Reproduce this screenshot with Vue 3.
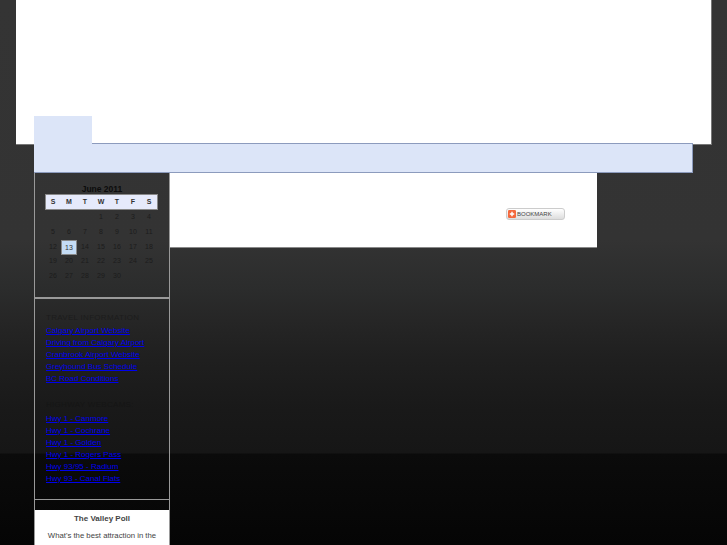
<script setup>
const weeks = [
  ['', '', '', 1, 2, 3, 4],
  [5, 6, 7, 8, 9, 10, 11],
  [12, 13, 14, 15, 16, 17, 18],
  [19, 20, 21, 22, 23, 24, 25],
  [26, 27, 28, 29, 30, '', ''],
];
const days = ['S', 'M', 'T', 'W', 'T', 'F', 'S'];
const travel = [
  'Calgary Airport Website',
  'Driving from Calgary Airport',
  'Cranbrook Airport Website',
  'Greyhound Bus Schedule',
  'BC Road Conditions',
];
const cams = [
  'Hwy 1 - Canmore',
  'Hwy 1 - Cochrane',
  'Hwy 1 - Golden',
  'Hwy 1 - Rogers Pass',
  'Hwy 93/95 - Radium',
  'Hwy 93 - Canal Flats',
];
</script>

<template>
  <div class="page">
    <div class="header">
      <div class="tab"></div>
    </div>
    <div class="main">
      <div class="bar"></div>
      <div class="columns">
        <div class="sidebar">
          <div class="calendar">
            <div class="month">June 2011</div>
            <div class="dayrow">
              <span v-for="(d, i) in days" :key="i">{{ d }}</span>
            </div>
            <div class="week" v-for="(w, i) in weeks" :key="i">
              <span v-for="(n, j) in w" :key="j" :class="{ today: n === 13 }">{{ n }}</span>
            </div>
          </div>
          <div class="links">
            <h3>TRAVEL INFORMATION</h3>
            <a v-for="t in travel" :key="t" href="#">{{ t }}</a>
            <h3 class="second">HIGHWAY WEBCAMS:</h3>
            <a v-for="c in cams" :key="c" href="#">{{ c }}</a>
          </div>
          <div class="gap"></div>
          <div class="poll">
            <b>The Valley Poll</b>
            <p>What's the best attraction in the Windermere Valley?</p>
          </div>
        </div>
        <div class="content">
          <div class="bookmark">
            <svg width="8" height="8" viewBox="0 0 9 9">
              <rect width="9" height="9" rx="1.5" fill="#f4683c" />
              <path d="M4.5 2v5M2 4.500h5" stroke="#fff" stroke-width="1.6" />
            </svg>
            <span>BOOKMARK</span>
          </div>
        </div>
      </div>
    </div>
  </div>
</template>

<style>
html, body {
  margin: 0;
  background: #000;
}
</style>

<style scoped>
.page {
  height: 545px;
  overflow: hidden;
  background: linear-gradient(#343434 0, #333333 240px, #2b2c2c 290px, #262626 320px, #1f1f1f 360px, #191919 410px, #161616 453px, #0b0b0b 454px, #050505 545px);
  font-family: "Liberation Sans", Arial, sans-serif;
}

.header {
  box-sizing: border-box;
  width: 696px;
  height: 145px;
  margin-left: 16px;
  padding: 116px 0 0 18px;
  background: #fff;
  border-right: 1px solid #777;
  border-bottom: 1px solid #777;
}

.tab {
  position: relative;
  z-index: 1;
  width: 58px;
  height: 29px;
  background: #dce5f8;
}

.main {
  margin-left: 34px;
  margin-top: -2px;
}

.bar {
  box-sizing: border-box;
  width: 659px;
  height: 30px;
  background: #dce5f8;
  border: 1px solid #8c9bbd;
  border-left: 0;
}

.columns {
  display: flex;
  align-items: flex-start;
}

.sidebar {
  box-sizing: border-box;
  width: 136px;
  border-left: 1px solid #999;
  border-right: 1px solid #999;
}

.calendar {
  box-sizing: border-box;
  height: 126px;
  padding: 11px 10px 0;
  border-bottom: 2px solid #999;
  font-size: 7px;
  color: #1c1c1c;
  text-align: center;
}

.month {
  font-size: 8.500px;
  font-weight: bold;
  line-height: 10px;
  color: #0c0c0c;
}

.dayrow {
  display: grid;
  grid-template-columns: repeat(7, 16px);
  width: 113px;
  height: 16px;
  line-height: 16px;
  background: #e6eafb;
  box-shadow: inset 0 0 0 1px #888;
  font-weight: bold;
  color: #333;
}

.week {
  display: grid;
  grid-template-columns: repeat(7, 16px);
  height: 14.750px;
  line-height: 14.750px;
}

.week span {
  box-sizing: border-box;
}

.today {
  background: #c5dcf5;
  border: 1px solid #888;
  color: #333;
  line-height: 13px;
}

.links {
  box-sizing: border-box;
  height: 201px;
  padding: 12px 0 0 11px;
  border-bottom: 1px solid #999;
}

h3 {
  margin: 0;
  font-size: 8px;
  line-height: 14px;
  font-weight: normal;
  letter-spacing: 0.300px;
  color: #1c1c1c;
  white-space: nowrap;
}

.second {
  margin-top: 13px;
  margin-bottom: 1px;
  color: #151515;
}

.links a {
  display: block;
  height: 12px;
  font-size: 8px;
  line-height: 12px;
  color: #0000ee;
  white-space: nowrap;
}

.gap {
  height: 10px;
}

.poll {
  height: 60px;
  padding-top: 3px;
  background: #fff;
  text-align: center;
  font-size: 7.750px;
  color: #444;
}

.poll b {
  display: block;
  font-size: 8px;
  line-height: 12px;
}

.poll p {
  margin: 5px 8px 0;
  line-height: 12px;
}

.content {
  box-sizing: border-box;
  display: flex;
  align-items: flex-start;
  width: 427px;
  height: 75px;
  padding: 35px 0 0 336px;
  background: #fff;
  border-bottom: 1px solid #888;
}

.bookmark {
  box-sizing: border-box;
  display: flex;
  align-items: center;
  gap: 1px;
  width: 59px;
  height: 12px;
  padding-left: 1px;
  border: 1px solid #ccc;
  border-radius: 3px;
  background: linear-gradient(#fff, #ddd);
  font-size: 6px;
  color: #444;
}
</style>
